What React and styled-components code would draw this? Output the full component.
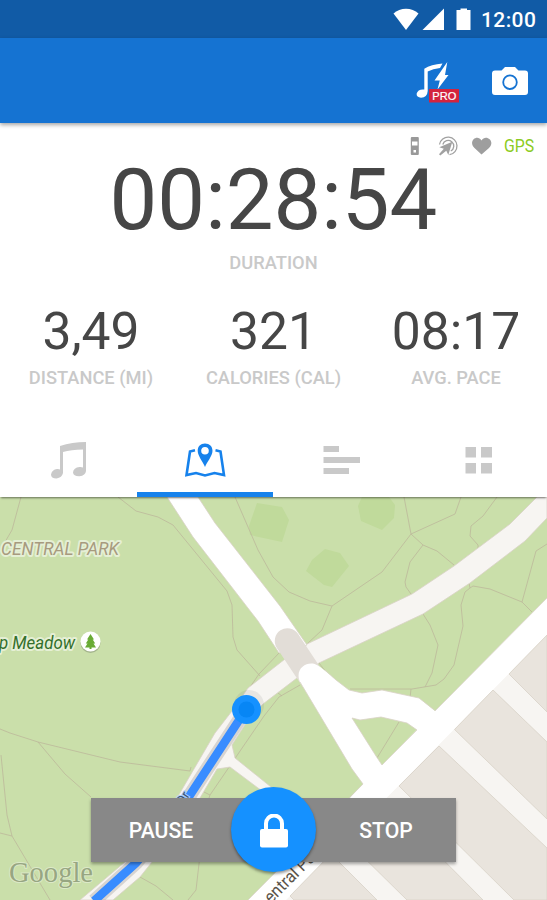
import React from 'react';
import styled, { createGlobalStyle } from 'styled-components';

const Global = createGlobalStyle`
  * { box-sizing: border-box; }
  body { margin: 0; background: #fff; font-family: Roboto, "Liberation Sans", sans-serif; }
`;

const Screen = styled.div`
  width: 547px;
  height: 900px;
  display: flex;
  flex-direction: column;
  overflow: hidden;
  background: #fff;
`;

const StatusBar = styled.div`
  height: 38px;
  flex: none;
  display: flex;
  justify-content: flex-end;
  align-items: center;
  padding-right: 11px;
  background: #115ba6;
`;

const StatusIcons = styled.svg`
  width: 80px;
  height: 24px;
  margin-right: 8px;
`;

const Clock = styled.span`
  width: 55px;
  color: #fff;
  font-size: 21px;
  font-weight: 500;
  line-height: 38px;
  letter-spacing: 0.4px;
  white-space: nowrap;
  padding-top: 2px;
`;

const AppBar = styled.header`
  height: 85px;
  flex: none;
  display: flex;
  justify-content: flex-end;
  align-items: center;
  gap: 32px;
  padding-right: 19px;
  background: #1573d2;
  box-shadow: 0 2px 4px rgba(0, 0, 0, 0.35);
  z-index: 1;
`;

const BarIcon = styled.svg`
  width: ${(p) => p.$w}px;
  height: 44px;
`;

const Sensors = styled.div`
  height: 40px;
  flex: none;
  display: flex;
  justify-content: flex-end;
  align-items: center;
  padding: 6px 12px 0 0;
`;

const SensorIcons = styled.svg`
  width: 84px;
  height: 24px;
  margin-right: 11px;
`;

const Gps = styled.span`
  width: 31px;
  font-size: 18.4px;
  line-height: 20px;
  color: #8ccb23;
  white-space: nowrap;
  transform: scaleX(0.86);
  transform-origin: 0 50%;
`;

const Value = styled.div`
  color: #464646;
  text-align: center;
  white-space: nowrap;
  font-size: ${(p) => (p.$large ? 85 : 51.6)}px;
  line-height: ${(p) => (p.$large ? 72 : 52)}px;
`;

const Label = styled.div`
  color: #c9c9c9;
  font-size: 18.3px;
  font-weight: 500;
  line-height: 24px;
  text-align: center;
  white-space: nowrap;
`;

const Duration = styled.section`
  height: 143px;
  flex: none;
  display: flex;
  flex-direction: column;
  gap: 15px;
  padding-top: 1px;
`;

const Stats = styled.section`
  height: 119px;
  flex: none;
  display: grid;
  grid-template-columns: 182px 183px 182px;
`;

const Stat = styled.div`
  display: flex;
  flex-direction: column;
  gap: 8px;
`;

const Tabs = styled.nav`
  height: 72px;
  flex: none;
  display: grid;
  grid-template-columns: 137px 136px 137px 137px;
  box-shadow: 0 2px 2px -1px rgba(0, 0, 0, 0.5);
  background: #fff;
  z-index: 1;
`;

const Tab = styled.div`
  display: flex;
  justify-content: center;
  border-bottom: 5px solid ${(p) => (p.$active ? '#1682ec' : 'transparent')};
  color: ${(p) => (p.$active ? '#1682ec' : '#c9c9c9')};
`;

const TabIcon = styled.svg`
  width: 44px;
  height: 44px;
  margin-top: 14px;
`;

const MapArea = styled.main`
  position: relative;
  height: 403px;
  flex: none;
  display: flex;
`;

const MapSvg = styled.svg`
  width: 547px;
  height: 403px;
  display: block;
`;

const Controls = styled.div`
  position: absolute;
  left: 91px;
  top: 301px;
  width: 365px;
  height: 64px;
  display: flex;
  justify-content: space-between;
  background: #888;
  box-shadow: 0 2px 3px rgba(0, 0, 0, 0.35);
`;

const ControlButton = styled.button`
  width: 140px;
  padding: 2px 0 0;
  border: 0;
  background: transparent;
  color: #fff;
  font: 500 21.2px/62px Roboto, sans-serif;
  white-space: nowrap;
`;

const LockButton = styled.button`
  position: absolute;
  left: 231px;
  top: 290px;
  width: 85px;
  height: 85px;
  padding: 0;
  border: 0;
  border-radius: 50%;
  display: flex;
  align-items: center;
  justify-content: center;
  background: #1591ff;
  box-shadow: 0 2px 3px rgba(0, 0, 0, 0.4);
`;

const LockIcon = styled.svg`
  width: 28px;
  height: 34px;
  margin-top: 3px;
`;

const STATS = [
  { value: '3,49', label: 'DISTANCE (MI)' },
  { value: '321', label: 'CALORIES (CAL)' },
  { value: '08:17', label: 'AVG. PACE' },
];

const FOOTPATHS = [
  'M21 497 12 530 5 542',
  'M118 497 136 511 158 517 173 525 227 591 232 605 233 637 237 650 260 676',
  'M235 497 258 550 273 577 289 592 310 601 332 606',
  'M404 497 411 534 382 572 332 606 322 630 307 644',
  'M461 497 455 514 411 534 423 545 437 551 454 565',
  'M423 545 410 562 405 582 406 587 411 594',
  'M497 497 483 516 471 526 470 536 478 545 478 549',
  'M469 583 470 588 465 592 461 605 463 626 454 665 444 679 436 685 412 689 350 689',
  'M470 588 473 586 490 589 522 602 532 612',
  'M522 602 536 551 547 544',
  'M423 614 430 625 438 645 432 673 425 687',
  'M411 689 410 698',
  'M399 722 377 758',
  'M319 663 326 672',
  'M280 652 259 674 248 690',
  'M300 685 279 697 264 716 210 795',
  'M278 693 282 696',
  'M0 729 10 733 38 742 120 762 190 771 191 767',
  'M38 742 65 774 91 797',
  'M1 755 7 815 12 836 31 868 50 900',
  'M0 833 12 836',
  'M204 792 210 795 207 804',
  'M200 855 196 890 188 900',
  'M140 877 156 886 173 900',
];

const BLOCKS = [
  '547,635 509,674 547,712',
  '493,690 454.5,729.5 547,819 547,742',
  '439,746 399,786 514,900 547,900 547,848',
  '386,802 347,841 407,900 483,900',
  '331,854 290,896 294,900 377,900',
];

function ParkMap() {
  return (
    <MapSvg viewBox="0 497 547 403" fontFamily="Roboto, sans-serif">
      <rect y="497" width="547" height="403" fill="#cadfaa" />
      <g fill="#c0da9b">
        <path d="M257 503 282 507 289 520 282 542 250 535 249 526z" />
        <path d="M362 497H389L395 505 394 518 382 530 361 521 358 506z" />
        <path d="M325 549 340 553 349 566 332 587 324 585 306 571 312 560z" />
      </g>
      <g fill="none" stroke="#bcb89b" strokeWidth=".8">
        {FOOTPATHS.map((d) => <path key={d} d={d} />)}
      </g>
      <path
        d="M537 497 510 524 454 566 412 594 307 644 285 659 248 688 232 711 215 733 177 798 160 829 125 862 80 900H113L140 877 152 862 200 798 217 769 230 767 262 791 276 791 235 758 232 745 248 720 263 704 297 678 319 663 423 614 470 583 525 541 547 518V497z"
        fill="#f7f5f2" stroke="#d9d2c6" strokeWidth=".8"
      />
      <path d="M547 598V900H248L350 798z" fill="#f7f5f2" />
      <path d="M547 635 290 896 286 900H248L350 798 435 711 547 598z" fill="#fff" />
      <g fill="#e9e4dd" stroke="#d8d2c7" strokeWidth=".8">
        {BLOCKS.map((points) => <polygon key={points} points={points} />)}
      </g>
      <path d="M167 497 193 537 258 621 279 653 307 645 280 606 215 523 198 497z" fill="#fff" stroke="#d9d2c6" strokeWidth=".8" />
      <path d="M287.500 641 312 678" stroke="#e2ddd7" strokeWidth="25.5" strokeLinecap="round" />
      <path
        fillRule="evenodd"
        d="M300 682C295 670 304 663 312 663.500C317 664 321 667 336 680L349 690 362 693 382 690 419 698 435 711 448 698 400 760 350 798 363 784 352 769zM352 718 376 756 382 765 417 730 407 723 381 717 360 720z"
        fill="#fff"
      />
      <path d="M325 670 336 680 349 690 362 693 382 690 419 698 435 710.500M300 682 352 769 363 784M352 718 376 756 382 765 417 730 407 723 381 717 360 720z" fill="none" stroke="#d9d2c6" strokeWidth=".8" />
      <path d="M435 711 547 598M363 784 248 900" stroke="#d9d2c6" strokeWidth=".8" />

      <path d="M247 708 190 795 176 814 136 863 94 901" fill="none" stroke="#8d8983" strokeOpacity=".3" strokeWidth="14" />
      <path d="M247 708 190 795 176 814 136 863 94 901" fill="none" stroke="#388cff" strokeWidth="8.500" />
      <text transform="translate(183 806) rotate(-57)" fontSize="13" fill="#405570" stroke="#a8cfff" strokeWidth="2" paintOrder="stroke">Dr</text>
      <circle cx="249" cy="705" r="15" fill="#777" opacity=".12" />
      <circle cx="246.500" cy="709.500" r="14.500" fill="#1591ff" />
      <circle cx="246.500" cy="709.500" r="8" fill="#0786f5" />

      <text x="1" y="555" fontSize="18.500" fontStyle="italic" textLength="118" lengthAdjust="spacingAndGlyphs" fill="#a79a7e" stroke="#e5efd5" strokeWidth="4" strokeLinejoin="round" paintOrder="stroke">CENTRAL PARK</text>
      <text x="-1" y="648.500" fontSize="18.500" fontStyle="italic" textLength="76" lengthAdjust="spacingAndGlyphs" fill="#33702b" stroke="#e5efd5" strokeWidth="4" strokeLinejoin="round" paintOrder="stroke">p Meadow</text>
      <circle cx="90.500" cy="643" r="10" fill="#8b987a" opacity=".6" />
      <circle cx="90.500" cy="641.500" r="10" fill="#fff" />
      <path d="M90.500 634 94 639.500H92.700L95.200 643.500H93.500L96 647.500H91.500V649H89.500V647.500H85L87.500 643.500H85.800L88.300 639.500H87z" fill="#69ab35" />
      <text transform="translate(271 904) rotate(-45)" fontSize="17.500" fill="#5b5348" textLength="64" lengthAdjust="spacingAndGlyphs">entral Pa</text>
      <text x="9" y="882" fontFamily="Liberation Serif, serif" fontSize="29" textLength="84" lengthAdjust="spacingAndGlyphs" fill="#97a682" stroke="#dce9c8" strokeWidth="2" paintOrder="stroke">Google</text>
    </MapSvg>
  );
}

export default function App() {
  return (
    <>
      <Global />
      <Screen>
        <StatusBar>
          <StatusIcons viewBox="392 7 80 24" fill="#fff">
            <path d="M392.500 13.500C399 7 411 7 417.500 13.500L405 30z" />
            <path d="M421.500 30 443 8.500V30z" />
            <path d="M456.500 10H459.500V8.500H466V10H469.500V30H455.500V10z" />
          </StatusIcons>
          <Clock>12:00</Clock>
        </StatusBar>
        <AppBar>
          <BarIcon $w={44} viewBox="417 59 44 44">
            <path d="M425.300 68.800Q432 64.500 443.500 63.500L441 68Q434 68.500 428.700 71.500V91Q428.300 97.500 422 97.700Q417.500 97.500 417.600 93.800Q419 88.800 425.300 89.500z" fill="#fff" />
            <path d="M448.300 62 446 75H449.500L438.500 89.500 440.800 80.500H435.500z" fill="#fff" />
            <rect x="430" y="89" width="30" height="13.500" fill="#d3243e" />
            <text x="433.300" y="100" textLength="24" lengthAdjust="spacingAndGlyphs" fontFamily="Liberation Sans, sans-serif" fontSize="11.800" fill="#fff" stroke="#fff" strokeWidth=".2">PRO</text>
          </BarIcon>
          <BarIcon $w={36} viewBox="492.500 59 36 44">
            <path d="M495.500 70.500H502L505.500 67H515.500L519 70.500H525.500Q528.500 70.500 528.500 73.500V92Q528.500 95 525.500 95H495.500Q492.500 95 492.500 92V73.500Q492.500 70.500 495.500 70.500z" fill="#fff" />
            <circle cx="510.500" cy="82.200" r="6.800" fill="none" stroke="#1573d2" strokeWidth="1.800" />
          </BarIcon>
        </AppBar>
        <Sensors>
          <SensorIcons viewBox="409 134 84 24">
            <rect x="410.800" y="137" width="8" height="18" rx="1" fill="#999" />
            <rect x="412" y="141.500" width="5.500" height="4" fill="#fff" />
            <rect x="413.500" y="150" width="2.500" height="2.500" fill="#fff" />
            <g fill="none" stroke="#a1a1a1" strokeWidth="1.300">
              <path d="M439.500 144.500A8.800 8.800 0 1 1 449.500 154.700" />
              <path d="M442.800 144.500A5.600 5.600 0 1 1 450.800 151" />
            </g>
            <path d="M452.300 141.800 448.300 155 446.300 150.800 440.300 155.500 439 154.200 443.800 148.800 439.300 147.300z" fill="#a1a1a1" />
            <path d="M481.500 154.500 474.500 148C467.500 141 477.500 133.500 481.500 140.500C485.500 133.500 496 141 489 148z" fill="#9e9e9e" />
          </SensorIcons>
          <Gps>GPS</Gps>
        </Sensors>
        <Duration>
          <Value $large>00:28:54</Value>
          <Label>DURATION</Label>
        </Duration>
        <Stats>
          {STATS.map((s) => (
            <Stat key={s.label}>
              <Value>{s.value}</Value>
              <Label>{s.label}</Label>
            </Stat>
          ))}
        </Stats>
        <Tabs>
          <Tab>
            <TabIcon viewBox="47 439 44 44" fill="currentColor">
              <path d="M60 446Q72 442 86 442V471Q85.500 475.500 79.500 476.300Q73.500 476.500 73 472.500Q73.500 467.500 79.500 467Q81.500 466.800 83 467.500V449.500Q71 449.500 63 452V473Q62 477.500 56.500 478.500Q51 478.500 51 474.500Q52 469.500 57 469Q59 468.800 60 469.500z" />
            </TabIcon>
          </Tab>
          <Tab $active>
            <TabIcon viewBox="183 439 44 44">
              <path d="M195 450.300 190 451.500 186.500 475 196 473 205 475.500 214.500 473 224 475 220.500 451.500 215.500 450.300" fill="none" stroke="currentColor" strokeWidth="2.600" />
              <path fillRule="evenodd" d="M205 443.500C200.500 443.500 197.700 446.500 197.700 450.800C197.700 456 203 462 205 467C207 462 212.500 456 212.500 450.800C212.500 446.500 209.500 443.500 205 443.500zM205 447A3.800 3.800 0 1 1 205 454.600A3.800 3.800 0 1 1 205 447z" fill="currentColor" />
            </TabIcon>
          </Tab>
          <Tab>
            <TabIcon viewBox="320 439 44 44" fill="currentColor">
              <path d="M323.500 446H339V452H323.500zM323.500 457H360V463H323.500zM323.500 468H349V474H323.500z" />
            </TabIcon>
          </Tab>
          <Tab>
            <TabIcon viewBox="457 439 44 44" fill="currentColor">
              <path d="M465.500 447H476V457.500H465.500zM481 447H492V457.500H481zM465.500 463H476V473.500H465.500zM481 463H492V473.500H481z" />
            </TabIcon>
          </Tab>
        </Tabs>
        <MapArea>
          <ParkMap />
          <Controls>
            <ControlButton>PAUSE</ControlButton>
            <ControlButton>STOP</ControlButton>
          </Controls>
          <LockButton aria-label="Lock">
            <LockIcon viewBox="0 0 28 34">
              <path d="M6 17V9.500A8 8 0 0 1 22 9.500V17" fill="none" stroke="#fff" strokeWidth="4" />
              <rect y="15" width="28" height="18.500" rx="2" fill="#fff" />
            </LockIcon>
          </LockButton>
        </MapArea>
      </Screen>
    </>
  );
}
